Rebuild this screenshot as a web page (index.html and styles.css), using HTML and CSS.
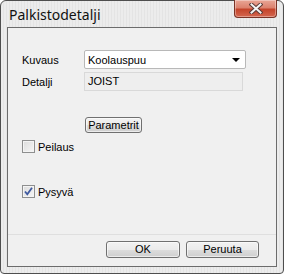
FILE: index.html
```html
<!DOCTYPE html>
<html lang="fi">
<head>
	<meta charset="UTF-8">
	<title>Palkistodetalji</title>
<link rel="stylesheet" href="styles.css">
</head>
<body>
<div class="window">
	<div class="titlebar">
		<span class="title">Palkistodetalji</span>
		<span class="close">
			<svg width="14" height="11" viewBox="0 0 14 11">
				<path d="M2.5 1.5 L11.5 9.5 M11.5 1.5 L2.5 9.5" stroke="#5a3a36" stroke-width="4" stroke-linecap="square"/>
				<path d="M2.5 1.5 L11.5 9.5 M11.5 1.5 L2.5 9.5" stroke="#f4f4f4" stroke-width="2" stroke-linecap="square"/>
			</svg>
		</span>
	</div>
	<div class="client">
		<div class="form">
			<div class="row">
				<span class="label">Kuvaus</span>
				<div class="combo">
					<span>Koolauspuu</span>
					<span class="arrow"></span>
				</div>
			</div>
			<div class="row">
				<span class="label">Detalji</span>
				<div class="textbox">JOIST</div>
			</div>
			<div class="btn param">Parametrit</div>
			<label class="check first"><span class="box"></span>Peilaus</label>
			<label class="check second"><span class="box checked">
				<svg width="11" height="11" viewBox="0 0 11 11">
					<path d="M2 5.5 L4.3 8.3 L9 1.8" stroke="#3f5aa0" stroke-width="1.8" fill="none"/>
				</svg>
			</span>Pysyvä</label>
		</div>
		<div class="footer">
			<div class="btn ok">OK</div>
			<div class="btn cancel">Peruuta</div>
		</div>
	</div>
</div>
</body>
</html>
```

FILE: styles.css
```css
html,body{
	margin:0;
	padding:0;
}
body{
	width:284px;
	height:274px;
	background:#ffffff;
	font-family:"Liberation Sans", Arial, sans-serif;
	font-size:11px;
	color:#000;
}
.window{
	box-sizing:border-box;
	width:284px;
	height:274px;
	border:1px solid #4e4e4e;
	border-radius:6px 6px 4px 4px;
	background:#e9e9e9 repeating-linear-gradient(90deg, #ececec 0 2px, #e4e4e4 2px 3px);
	padding:0 6px 6px 6px;
	display:flex;
	flex-direction:column;
}
.titlebar{
	height:26px;
	display:flex;
	justify-content:space-between;
	align-items:flex-start;
}
.title{
	font-family:"Noto Sans", "Open Sans", sans-serif;
	font-size:14px;
	color:#111;
	margin:5px 0 0 2px;
	line-height:17px;
}
.close{
	box-sizing:border-box;
	width:43px;
	height:18px;
	margin:-1px 0 0 0;
	border:1px solid #7a3326;
	border-top:none;
	border-radius:0 0 4px 4px;
	background:linear-gradient(#e9a696 0%, #dc826e 45%, #c4442b 55%, #d4674f 100%);
	display:flex;
	justify-content:center;
	align-items:center;
	box-shadow:inset 0 0 0 1px rgba(255,255,255,0.35);
}
.close svg{
	display:block;
}
.client{
	flex:1;
	border:1px solid #6c6c6c;
	background:#f0f0f0;
	display:flex;
	flex-direction:column;
}
.form{
	flex:1;
	padding:22px 0 0 14px;
	display:flex;
	flex-direction:column;
	align-items:flex-start;
}
.row{
	display:flex;
	align-items:center;
	height:19px;
}
.row + .row{
	margin-top:3px;
}
.label{
	width:62px;
}
.combo{
	box-sizing:border-box;
	width:162px;
	height:19px;
	border:1px solid #b8b8b8;
	border-radius:2px;
	background:#fff;
	display:flex;
	justify-content:space-between;
	align-items:center;
	padding:0 5px 0 3px;
}
.arrow{
	width:0;
	height:0;
	border-left:4px solid transparent;
	border-right:4px solid transparent;
	border-top:4px solid #000;
	margin-top:1px;
}
.textbox{
	box-sizing:border-box;
	width:159px;
	height:19px;
	border:1px solid #d9d9d9;
	background:#eeeeee;
	padding:0 3px;
	line-height:17px;
}
.btn{
	box-sizing:border-box;
	border:1px solid #707070;
	border-radius:3px;
	background:linear-gradient(#f2f2f2 0%, #ebebeb 50%, #dddddd 51%, #cfcfcf 100%);
	box-shadow:inset 0 0 0 1px rgba(255,255,255,0.6);
	text-align:center;
}
.param{
	width:57px;
	height:16px;
	line-height:14px;
	margin:26px 0 0 63px;
}
.check{
	display:flex;
	align-items:center;
	height:13px;
}
.check.first{
	margin-top:7px;
}
.check.second{
	margin-top:32px;
}
.box{
	box-sizing:border-box;
	width:13px;
	height:13px;
	border:1px solid #8e8f8f;
	background:linear-gradient(135deg, #dcdcdc, #f6f6f6);
	box-shadow:inset 0 0 0 1px #f4f4f4;
	margin-right:3px;
	display:flex;
	justify-content:center;
	align-items:center;
}
.footer{
	border-top:1px solid #dfdfdf;
	padding:6px 17px 8px 0;
	display:flex;
	justify-content:flex-end;
	gap:6px;
}
.ok,.cancel{
	width:74px;
	height:17px;
	line-height:15px;
}
.cancel{
	width:73px;
}
```
